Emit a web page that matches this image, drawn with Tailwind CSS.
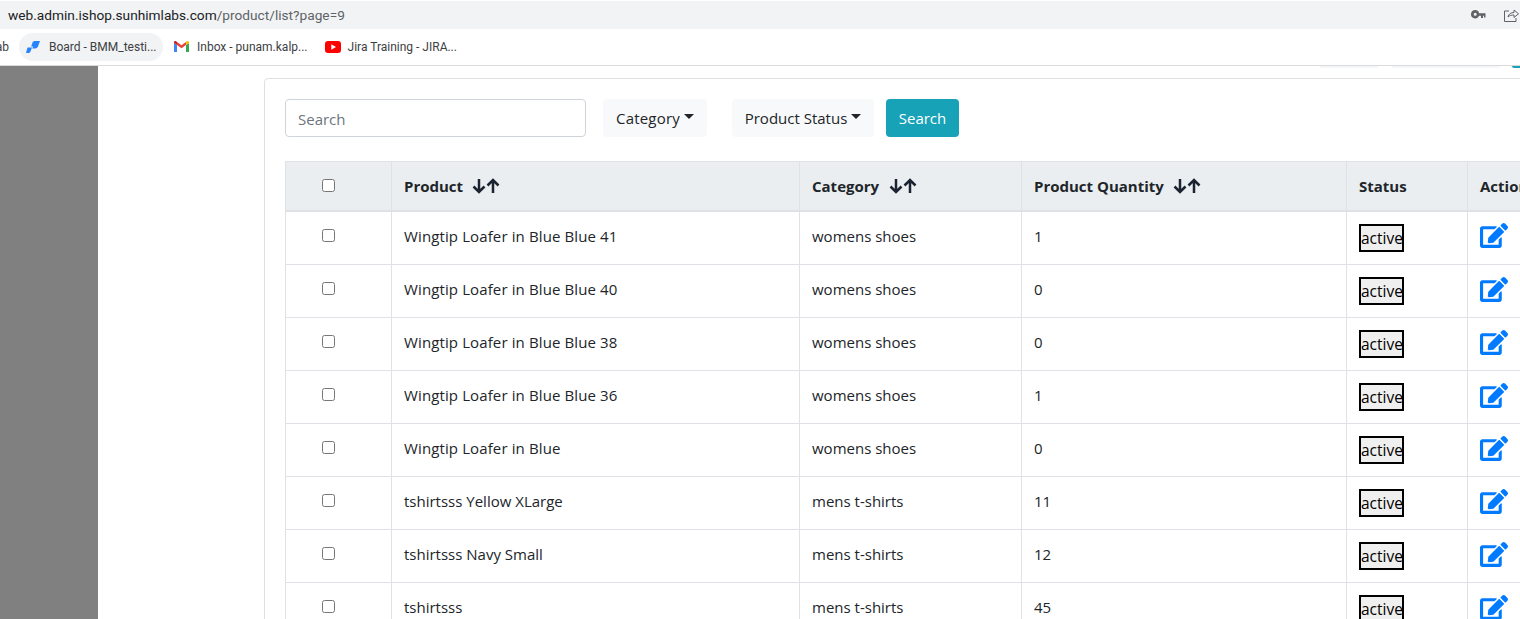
<!DOCTYPE html>
<html lang="en">
<head>
  <meta charset="UTF-8" />
  <title>Products</title>
  <script src="https://cdn.jsdelivr.net/npm/@tailwindcss/browser@4"></script>
</head>
<body class="h-screen overflow-hidden bg-white font-['Open_Sans','Noto_Sans',sans-serif] text-[#212529]">

  <!-- browser chrome -->
  <div class="flex h-[28px] mt-[1px] items-center justify-between bg-[#f1f3f4] pl-[8px] font-['Roboto',sans-serif] text-[13.7px]">
    <div><span class="text-[#202124]">web.admin.ishop.sunhimlabs.com</span><span class="text-[#5f6368]">/product/list?page=9</span></div>
    <div class="flex items-center gap-[17px] pr-[1px]">
      <svg class="mb-[1px] w-[15px] h-[9px]" viewBox="0 0 15 9" fill="#5f6368"><path d="M4.200 0a4.200 4.200 0 1 0 3.900 5.800H10v2.200h2V5.800h1V7.500h1.500V3.200H8.100A4.200 4.200 0 0 0 4.200 0zm0 2.800a1.500 1.500 0 1 1 0 3 1.500 1.500 0 0 1 0-3z"/></svg>
      <svg class="w-[16px] h-[16px]" viewBox="0 0 16 16" fill="none" stroke="#5f6368" stroke-width="1"><path d="M6 4H1.500v10.500H13V11"/><path d="M5 10c.5-3 3-4.500 6-4.500V3l4.500 3.800-4.500 3.700V8C8.500 8 6.500 8.500 5 10z"/></svg>
    </div>
  </div>
  <div class="flex h-[35px] items-center border-b border-[#d9dadb] pb-[1px] font-['Roboto',sans-serif] text-[12px] text-[#3c4043] box-content">
    <span class="w-[9px] overflow-hidden whitespace-nowrap flex justify-end">ab</span>
    <div class="ml-[10px] flex h-[28px] w-[144px] items-center gap-[9px] rounded-full bg-[#f2f3f5] pl-[7px]">
      <svg class="w-[14px] h-[12px]" viewBox="0 0 14 12" fill="#2684ff"><path d="M1.500 6.500H6L4.500 10.500C4 11.500 3.200 12 2 12H0z"/><path d="M6.500 1.500C7 .5 8 0 9 0h5l-1.800 5c-.5 1.200-1.500 2.500-3.200 2.500H6.300L7 5.500H5.200z"/></svg>
      <span>Board - BMM_testi...</span>
    </div>
    <div class="ml-[11px] flex items-center gap-[8px]">
      <svg class="w-[15px] h-[11px]" viewBox="0 0 15 11"><path fill="#4285f4" d="M0 2v9h3V4z"/><path fill="#34a853" d="M12 4v7h3V2z"/><path fill="#c5221f" d="M0 1.500C0 .2 1.300-.3 2.300.4L3 1v3L0 2z"/><path fill="#fbbc04" d="M15 1.500C15 .2 13.700-.3 12.700.4L12 1v3l3-2z"/><path fill="#ea4335" d="M3 1l4.500 3.300L12 1v3L7.500 7.300 3 4z"/></svg>
      <span>Inbox - punam.kalp...</span>
    </div>
    <div class="ml-[17px] flex items-center gap-[7px]">
      <svg class="w-[16px] h-[12px]" viewBox="0 0 16 12"><rect width="16" height="12" rx="3" fill="#ff0000"/><path d="M6.300 3.300v5.400L11 6z" fill="#fff"/></svg>
      <span>Jira Training - JIRA...</span>
    </div>
  </div>

  <div class="flex h-[553px] overflow-hidden">
    <div class="w-[98px] shrink-0 bg-[#808080]"></div>

    <div class="relative min-w-0 flex-1 overflow-hidden pl-[166px] pt-[12px]">
      <!-- clipped nav pills, only the bottom edge shows -->
      <div class="absolute top-0 left-[1222px] h-[2px] w-[58px] rounded-b-md bg-[#f4f6f9]"></div>
      <div class="absolute top-0 left-[1294px] h-[2px] w-[108px] rounded-b-md bg-[#f4f6f9]"></div>
      <div class="absolute top-0 left-[1414px] h-[2px] w-[10px] rounded-bl-md bg-[#17a2b8]"></div>

      <div class="w-[1400px] rounded-[4px] border border-[#dfdfdf] px-[20px] pt-[20px]">
        <div class="flex items-center text-[15px]">
          <input type="text" placeholder="Search" class="h-[38px] w-[301px] rounded-[4px] border border-[#ced4da] px-[12px] pt-[2px] text-[15px] placeholder:text-[#6c757d]" />
          <button class="ml-[17px] flex h-[38px] w-[104px] items-center justify-center gap-[4px] rounded-[4px] bg-[#f8f9fa] tracking-[0.2px]">Category<i class="mt-[-3px] border-x-[5px] border-t-[5px] border-x-transparent border-t-[#212529]"></i></button>
          <button class="ml-[25px] flex h-[38px] w-[142px] items-center justify-center gap-[4px] rounded-[4px] bg-[#f8f9fa]">Product Status<i class="mt-[-3px] border-x-[5px] border-t-[5px] border-x-transparent border-t-[#212529]"></i></button>
          <button class="ml-[12px] h-[38px] w-[73px] rounded-[4px] bg-[#17a2b8] text-white">Search</button>
        </div>

        <table class="mt-[24px] table-fixed border-collapse text-[15px]">
          <colgroup>
            <col class="w-[106px]" /><col class="w-[408px]" /><col class="w-[222px]" /><col class="w-[325px]" /><col class="w-[121px]" /><col class="w-[120px]" />
          </colgroup>
          <thead>
            <tr class="h-[49px] bg-[#eaeef1] text-left font-bold">
              <th class="border border-b-2 border-[#dee2e6] pr-[20px] text-center"><input type="checkbox" class="size-[13px] align-middle mb-[4px]" /></th>
              <th class="border border-b-2 border-[#dee2e6] px-[12px]"><span class="flex items-center gap-[9px]">Product <svg class="w-[28px] h-[16px]" viewBox="0 0 28 16" fill="none" stroke="#1b2430" stroke-width="2.500"><path d="M7 1v13M1.500 8.500 7 14l5.500-5.500M21 15V2M15.500 7.500 21 2l5.500 5.500"/></svg></span></th>
              <th class="border border-b-2 border-[#dee2e6] px-[12px]"><span class="flex items-center gap-[10px]">Category <svg class="w-[28px] h-[16px]" viewBox="0 0 28 16" fill="none" stroke="#1b2430" stroke-width="2.500"><path d="M7 1v13M1.500 8.500 7 14l5.500-5.500M21 15V2M15.500 7.500 21 2l5.500 5.500"/></svg></span></th>
              <th class="border border-b-2 border-[#dee2e6] px-[12px]"><span class="flex items-center gap-[9px]">Product Quantity <svg class="w-[28px] h-[16px]" viewBox="0 0 28 16" fill="none" stroke="#1b2430" stroke-width="2.500"><path d="M7 1v13M1.500 8.500 7 14l5.500-5.500M21 15V2M15.500 7.500 21 2l5.500 5.500"/></svg></span></th>
              <th class="border border-b-2 border-[#dee2e6] px-[12px]">Status</th>
              <th class="border border-b-2 border-[#dee2e6] px-[12px]">Action</th>
            </tr>
          </thead>
          <tbody id="rows"></tbody>
        </table>
      </div>
    </div>
  </div>

  <script>
    const products = [
      ['Wingtip Loafer in Blue Blue 41', 'womens shoes', '1'],
      ['Wingtip Loafer in Blue Blue 40', 'womens shoes', '0'],
      ['Wingtip Loafer in Blue Blue 38', 'womens shoes', '0'],
      ['Wingtip Loafer in Blue Blue 36', 'womens shoes', '1'],
      ['Wingtip Loafer in Blue', 'womens shoes', '0'],
      ['tshirtsss Yellow XLarge', 'mens t-shirts', '11'],
      ['tshirtsss Navy Small', 'mens t-shirts', '12'],
      ['tshirtsss', 'mens t-shirts', '45'],
    ];

    const editIcon = `<svg class="mb-[4px] w-[28px] h-[25px]" viewBox="0 0 576 512" fill="#007bff"><path d="M402.600 83.200l90.200 90.200c3.800 3.800 3.800 10 0 13.800L274.400 405.600l-92.800 10.300c-12.400 1.400-22.900-9.100-21.500-21.500l10.300-92.800L388.800 83.200c3.800-3.800 10-3.800 13.800 0zm162-22.900l-48.800-48.800c-15.200-15.200-39.900-15.200-55.200 0l-35.400 35.400c-3.800 3.800-3.800 10 0 13.800l90.200 90.200c3.800 3.800 10 3.800 13.800 0l35.400-35.400c15.200-15.300 15.200-40 0-55.200zM384 346.200V448H64V128h229.800c3.200 0 6.200-1.300 8.500-3.500l40-40c7.600-7.600 2.200-20.500-8.500-20.500H48C21.500 64 0 85.500 0 112v352c0 26.500 21.500 48 48 48h352c26.500 0 48-21.500 48-48V306.200c0-10.700-12.900-16-20.500-8.500l-40 40c-2.200 2.300-3.500 5.300-3.500 8.500z"/></svg>`;

    document.getElementById('rows').innerHTML = products.map(([name, category, qty], i) => `
      <tr class="${i === 0 ? 'h-[54px]' : 'h-[53px]'}">
        <td class="border border-[#dee2e6] pr-[20px] pb-[4px] text-center"><input type="checkbox" class="size-[13px] align-middle mb-[4px]" /></td>
        <td class="border border-[#dee2e6] px-[12px] pb-[4px] ${name.startsWith('Wingtip') ? 'tracking-[0.12px]' : ''}">${name}</td>
        <td class="border border-[#dee2e6] px-[12px] pb-[4px]">${category}</td>
        <td class="border border-[#dee2e6] px-[12px] pb-[4px]">${qty}</td>
        <td class="border border-[#dee2e6] px-[12px]"><span class="inline-block w-[45px] border-2 border-black bg-[#efefef] text-center text-[15.5px] leading-[24px] text-black">active</span></td>
        <td class="border border-[#dee2e6] px-[12px]">${editIcon}</td>
      </tr>`).join('');
  </script>
</body>
</html>
